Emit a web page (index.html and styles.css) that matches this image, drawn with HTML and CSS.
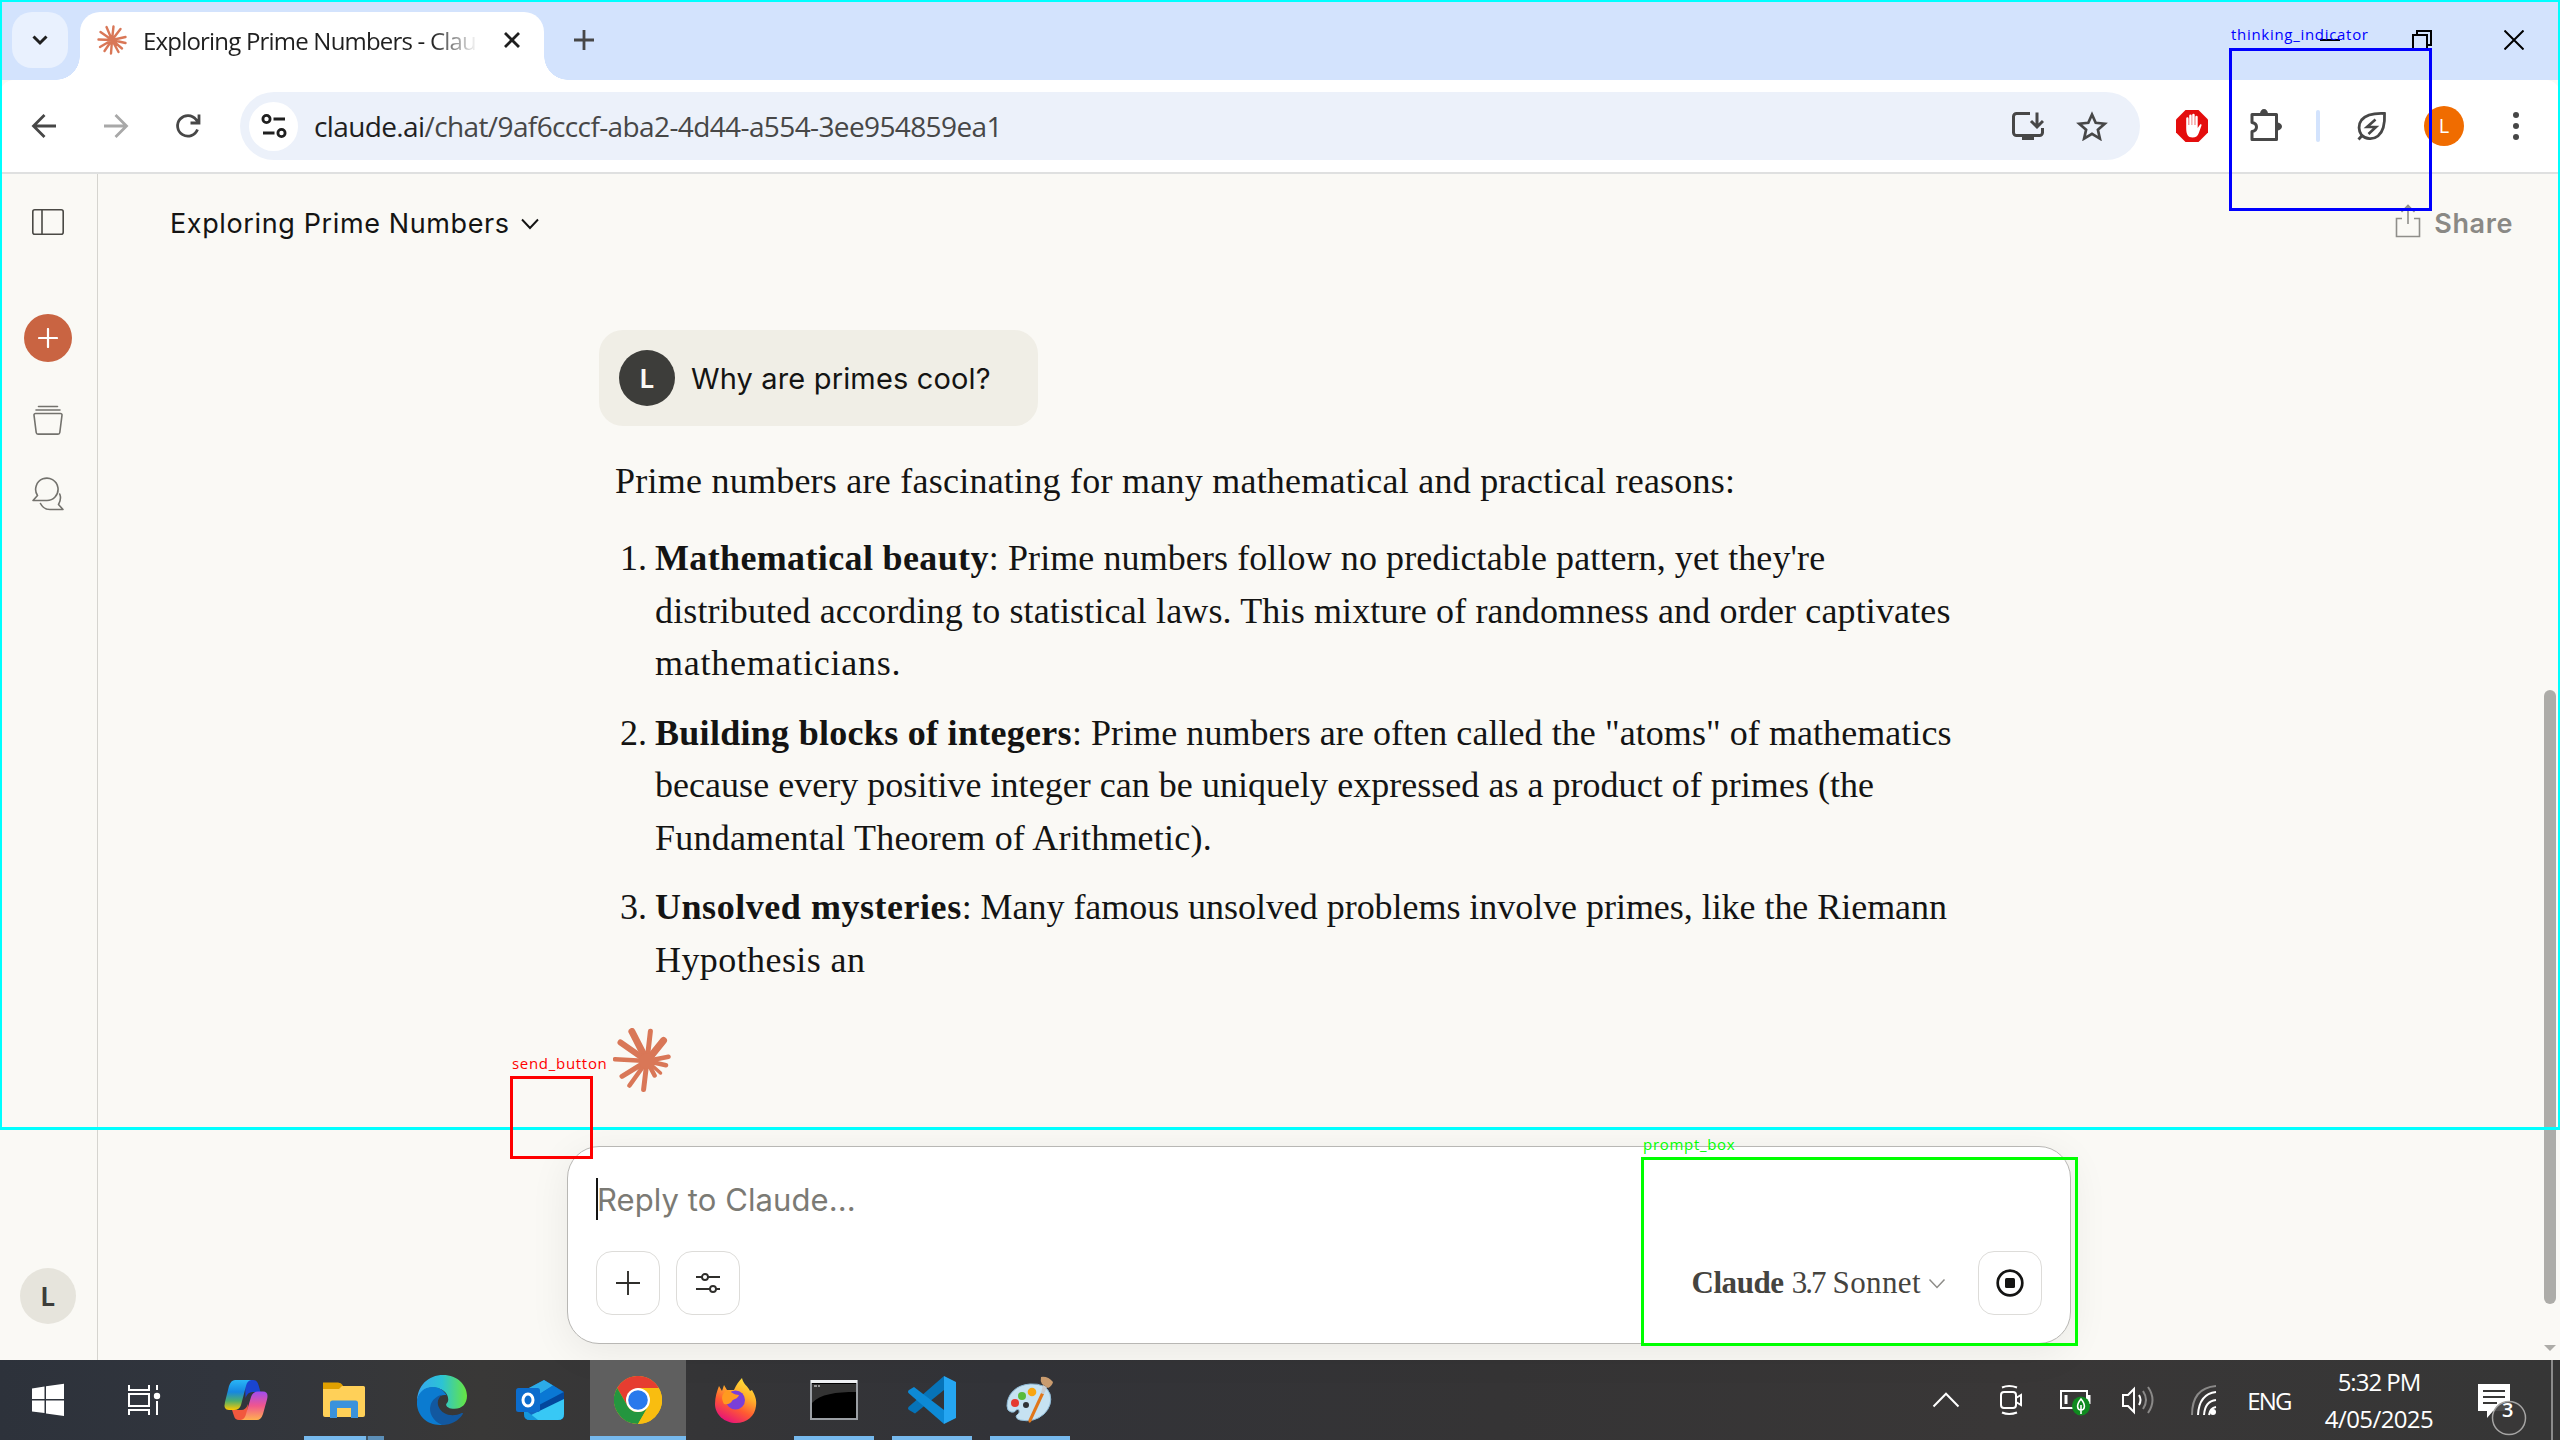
FILE: index.html
```
<!DOCTYPE html>
<html lang="en">
<head>
<meta charset="utf-8">
<title>Exploring Prime Numbers - Claude</title>
<link rel="stylesheet" href="styles.css">
</head>
<body>
<div class="screen">

  <div class="tabstrip">
    <div class="tab-search"><svg width="18" height="16" viewBox="0 0 18 16"><path d="M2.500 4.500l6.500 6.500 6.500-6.500" fill="none" stroke="#1f1f1f" stroke-width="3"/></svg></div>
    <div class="tab">
      <svg class="favicon" width="30" height="30" viewBox="0 0 30 30"><g stroke="#d97757" stroke-width="2.4" stroke-linecap="round"><path d="M15 15L9.5 2M15 15L16.5 1.5M15 15L23.5 4M15 15L28.5 12M15 15L28.5 18M15 15L25 23.5M15 15L21.5 27M15 15L14 28.5M15 15L7.5 26M15 15L3 22M15 15L1.5 14.5M15 15L3.5 7"/></g></svg>
      <span class="tab-title">Exploring Prime Numbers - Clau</span>
      <svg class="tab-close" width="18" height="18" viewBox="0 0 18 18"><path d="M2 2l14 14M16 2L2 16" stroke="#1f1f1f" stroke-width="2.8"/></svg>
    </div>
    <svg class="new-tab" width="22" height="22" viewBox="0 0 22 22"><path d="M11 1v20M1 11h20" stroke="#474747" stroke-width="2.8"/></svg>
    <div class="window-controls">
      <svg width="20" height="20" viewBox="0 0 20 20"><path d="M0 10h20" stroke="#000" stroke-width="2"/></svg>
      <svg width="20" height="20" viewBox="0 0 20 20"><path d="M1 5h14v14H1zM5 5V1h14v14h-4" fill="none" stroke="#000" stroke-width="2"/></svg>
      <svg width="20" height="20" viewBox="0 0 20 20"><path d="M.5.5l19 19M19.5.5l-19 19" stroke="#000" stroke-width="2"/></svg>
    </div>
  </div>

  <div class="toolbar">
    <svg class="nav-back" width="26" height="26" viewBox="0 0 26 26"><path d="M25 13H3M13.5 2L2.500 13l11 11" fill="none" stroke="#474747" stroke-width="2.8"/></svg>
    <svg class="nav-fwd" width="26" height="26" viewBox="0 0 26 26"><path d="M1 13h22M12.500 2l11 11-11 11" fill="none" stroke="#a8a8a8" stroke-width="2.800"/></svg>
    <svg class="nav-reload" width="26" height="26" viewBox="0 0 26 26"><path d="M22.500 16.500A10.300 10.300 0 1 1 21 6.500L23.500 9M24 1.500V10h-8.500" fill="none" stroke="#474747" stroke-width="2.800"/></svg>
    <div class="omnibox">
      <div class="site-info"><svg width="26" height="26" viewBox="0 0 26 26"><g fill="none" stroke="#1f1f1f" stroke-width="2.800"><circle cx="5.500" cy="6" r="3.600"/><path d="M12.500 6H24M2 20h11.500"/><circle cx="20.500" cy="20" r="3.600"/></g></svg></div>
      <span class="url"><b>claude.ai</b>/chat/9af6cccf-aba2-4d44-a554-3ee954859ea1</span>
      <svg class="install" width="32" height="30" viewBox="0 0 32 30"><g fill="none" stroke="#474747" stroke-width="3"><path d="M18 2.500H4.500a3 3 0 0 0-3 3v16a3 3 0 0 0 3 3h23a3 3 0 0 0 3-3V17M25 1.500v14M19 10l6 6 6-6"/></g><path d="M10 25h12v4H10z" fill="#474747"/></svg>
      <svg class="star" width="32" height="30" viewBox="0 0 32 30"><path d="M16 3.500l3.700 8.300 9 .900-6.800 6 2 8.900-7.900-4.700-7.900 4.700 2-8.900-6.800-6 9-.900z" fill="none" stroke="#474747" stroke-width="2.700"/></svg>
    </div>
    <svg class="adblock" width="32" height="32" viewBox="0 0 32 32"><path d="M9.500 0h13L32 9.500v13L22.500 32h-13L0 22.500v-13z" fill="#e40d0d"/><path d="M10.200 18V8.500a1.200 1.200 0 0 1 2.400 0V15h.6V5.800a1.200 1.200 0 0 1 2.500 0V15h.5V5a1.200 1.200 0 0 1 2.500 0v10h.6V7a1.200 1.200 0 0 1 2.400 0v11l2.200-3.200c.6-.9 2-.3 1.600.8L22.800 23c-1 3-3 4.500-6.300 4.500-4.500 0-6.300-3-6.300-9.500z" fill="#fff"/></svg>
    <svg class="puzzle" width="34" height="34" viewBox="0 0 34 34"><path d="M3 5.500h24.500v25H3v-8c6-1 6-8 0-9z" fill="none" stroke="#474747" stroke-width="3" stroke-linejoin="round"/><path d="M11 5a4 5 0 0 1 8 0zM28 13.500a5 4 0 0 1 0 8z" fill="#474747"/></svg>
    <span class="divider"></span>
    <svg class="leaf" width="30" height="30" viewBox="0 0 30 30"><g fill="none" stroke="#474747" stroke-width="2.800"><path d="M27.500 2.500C17 2 9 3.500 4.500 9 1 13.500 1.500 20 4.500 24c4.500 4.500 11.500 5 16.500 1 5.500-4.500 7-13 6.500-22.500zM5.500 24L1.500 28.500"/><path d="M18.500 8.500L10 16h9l-7.500 7" stroke-width="2.600"/></g></svg>
    <span class="profile">L</span>
    <svg class="kebab" width="6" height="30" viewBox="0 0 6 30"><g fill="#474747"><circle cx="3" cy="4" r="3"/><circle cx="3" cy="15" r="3"/><circle cx="3" cy="26" r="3"/></g></svg>
  </div>

  <div class="app">
    <nav class="rail">
      <svg width="32" height="26" viewBox="0 0 32 26"><g fill="none" stroke="#4a4945" stroke-width="1.600"><rect x=".8" y=".8" width="30.400" height="24.400" rx="2"/><path d="M10 1v24"/></g></svg>
      <span class="new-chat"><svg width="20" height="20" viewBox="0 0 20 20"><path d="M10 1v18M1 10h18" stroke="#fff" stroke-width="2.200" stroke-linecap="round"/></svg></span>
      <svg class="rail-projects" width="30" height="30" viewBox="0 0 30 30"><g fill="none" stroke="#73726d" stroke-width="1.600" stroke-linecap="round" stroke-linejoin="round"><path d="M5.500 1.500h19M3 5h24M2.500 8.500h25a1.500 1.500 0 0 1 1.500 1.700L26.800 27.500a1.800 1.800 0 0 1-1.800 1.600H5a1.800 1.800 0 0 1-1.800-1.600L1 10.200a1.500 1.500 0 0 1 1.500-1.700z"/></g></svg>
      <svg class="rail-chats" width="32" height="34" viewBox="0 0 32 34"><g fill="none" stroke="#73726d" stroke-width="1.600" stroke-linecap="round" stroke-linejoin="round"><path d="M14 23.500H1L5.500 18.500A11.200 11.200 0 1 1 14 23.500zM8.500 26.500c2 4 5.500 6 9.500 6h13l-4.500-5c2-3.500 2.700-7 1.200-10.500"/></g></svg>
      <span class="rail-user">L</span>
    </nav>

    <main class="chat">
      <header class="chat-head">
        <span class="chat-name">Exploring Prime Numbers</span>
        <svg width="18" height="12" viewBox="0 0 18 12"><path d="M1 1.500l8 8.500 8-8.500" fill="none" stroke="#141413" stroke-width="1.900"/></svg>
        <span class="share"><svg width="26" height="34" viewBox="0 0 26 34"><path d="M7 14.500H1.500V32.500h23V14.500H19M13 20V2M6.500 8L13 1.500 19.500 8" fill="none" stroke="#8f8e8a" stroke-width="1.600"/></svg>Share</span>
      </header>

      <section class="thread">
        <div class="user-msg"><span class="avatar">L</span><span class="user-text">Why are primes cool?</span></div>
        <div class="reply">
          <p class="ln s23">Prime numbers are fascinating for many mathematical and practical reasons:</p>
          <ol>
            <li><span class="num">1.</span>
              <div class="ln"><b class="s36">Mathematical beauty</b><span class="s9">: Prime numbers follow no predictable pattern, yet they're</span></div>
              <div class="ln s14">distributed according to statistical laws. This mixture of randomness and order captivates</div>
              <div class="ln s75">mathematicians.</div></li>
            <li><span class="num">2.</span>
              <div class="ln"><b class="s27">Building blocks of integers</b><span class="s7">: Prime numbers are often called the "atoms" of mathematics</span></div>
              <div class="ln s3">because every positive integer can be uniquely expressed as a product of primes (the</div>
              <div class="ln s18">Fundamental Theorem of Arithmetic).</div></li>
            <li><span class="num">3.</span>
              <div class="ln"><b class="s56">Unsolved mysteries</b><span class="tight">: Many famous unsolved problems involve primes, like the Riemann</span></div>
              <div class="ln s42">Hypothesis an</div></li>
          </ol>
          <svg class="spark" width="60" height="66" viewBox="0 0 60 66"><g stroke="#d97757" stroke-linecap="round"><path d="M34 33L18.900 3.500M34 33L50.500 12.500" stroke-width="7"/><path d="M34 33L7.500 14.500" stroke-width="6"/><path d="M34 33L37.400 3.300M34 33L30.600 61.500M34 33L9 48.300" stroke-width="5"/><path d="M34 33L55.500 28.700M34 33L53 37.300M34 33L41.600 47.500M34 33L16.500 57.500M34 33L2 31.300" stroke-width="4.500"/><path d="M34 33L47.500 45" stroke-width="3.500"/></g><circle cx="34" cy="33" r="8" fill="#d97757"/></svg>
        </div>

        <div class="composer">
          <div class="placeholder"><i class="caret"></i><span>Reply to Claude...</span></div>
          <div class="tools">
            <span class="btn"><svg width="24" height="24" viewBox="0 0 24 24"><path d="M12 0v24M0 12h24" stroke="#2f2e2b" stroke-width="1.900"/></svg></span>
            <span class="btn"><svg width="24" height="22" viewBox="0 0 24 22"><g fill="none" stroke="#2f2e2b" stroke-width="1.900"><path d="M0 5h6M12 5h12M0 17h14M20 17h4"/><circle cx="9" cy="5" r="3"/><circle cx="17" cy="17" r="3"/></g></svg></span>
            <span class="model"><b>Claude</b><span class="ver">3.7</span><span class="name">Sonnet</span></span>
            <svg class="model-chev" width="18" height="12" viewBox="0 0 18 12"><path d="M1.500 1.500L9 9.500l7.500-8" fill="none" stroke="#8d8c88" stroke-width="1.500"/></svg>
            <span class="btn"><svg width="28" height="28" viewBox="0 0 28 28"><circle cx="14" cy="14" r="12.300" fill="none" stroke="#141413" stroke-width="2.700"/><rect x="9" y="9" width="10" height="10" rx="1.500" fill="#141413"/></svg></span>
          </div>
        </div>
      </section>
      <div class="scroll-thumb"></div>
      <div class="scroll-arrow"></div>
    </main>
  </div>

  <div class="taskbar">
    <span class="cell"><svg width="34" height="34" viewBox="0 0 34 34"><path d="M1 5.500L13.500 3.500V16H1zM15 3.300L33 .8V16H15zM1 17.500h12.500V30L1 28.500zM15 17.500h18V33L15 30.500z" fill="#fff"/></svg></span>
    <span class="cell"><svg width="34" height="32" viewBox="0 0 34 32"><g fill="none" stroke="#fff" stroke-width="2"><path d="M2 1v5h20V1M2 10h20v12H2zM2 31v-5h20v5M30 1v5M30 17v14"/></g><circle cx="30" cy="12" r="3.200" fill="#fff"/></svg></span>
    <span class="cell first-app"><svg width="46" height="42" viewBox="0 0 46 42">
      <defs><linearGradient id="cpA" x2="0" y2="1"><stop stop-color="#29b6f6"/><stop offset=".4" stop-color="#1687e0"/><stop offset=".7" stop-color="#4fae6b"/><stop offset="1" stop-color="#ffc800"/></linearGradient><linearGradient id="cpB" x2="0" y2="1"><stop stop-color="#a04cf0"/><stop offset=".5" stop-color="#f0568e"/><stop offset="1" stop-color="#ffb050"/></linearGradient></defs>
      <path d="M22 1h8q4 0 5.500 5l2 7h-8q-5 0-7 6z" fill="#1a45d0"/><path d="M24 41h-8q-4 0-5-4l-2-6h9q5 0 7-6z" fill="#f2583e"/><path d="M12 1h16q-4 1-5 6l-5 19q-1.500 5-7 5H6q-6 0-4-8L6 7q2-6 6-6z" fill="url(#cpA)"/><path d="M34 41H18q4-1 5-6l5-17q2-5.500 7-5.500h5q6 0 4 8L40 35q-2 6-6 6z" fill="url(#cpB)"/></svg></span>
    <span class="cell run split"><svg width="44" height="38" viewBox="0 0 44 38"><path d="M1 1.500h15q3 0 5 3V10H1z" fill="#e0a000"/><path d="M1 8h16l3-3h21.500q1.500 0 1.500 1.500V34q0 2-2 2H3q-2 0-2-2z" fill="#ffd058"/><path d="M8 37V22q0-2.500 2.500-2.500h23Q36 19.500 36 22v15h-7V27H15v10z" fill="#3a92dc"/></svg></span>
    <span class="cell"><svg width="50" height="50" viewBox="0 0 48 48">
      <defs><linearGradient id="edA"><stop stop-color="#35a6f0"/><stop offset=".5" stop-color="#2cc3d5"/><stop offset="1" stop-color="#67e63f"/></linearGradient></defs>
      <path d="M0 26C0 10 11 0 25 0c14 0 23 10 23 20 0 8-5 12.500-12 12.500-5 0-8-2-8-4 0-1.300 2-2 2-5C30 17 24 12 15 12 7 12 1 18 0 26z" fill="url(#edA)"/><path d="M0 25c1-9 8-14 16-13.500 6 .5 10 3.500 12.500 8C22 18 17 23 18 30c1 8 8 14 17 12-3 3.500-8 6-13 6C8 48-1 37 0 25z" fill="#0b7bd0"/><path d="M24 19c-4 3-5 8-3 12 3 7 13 10 22 5.500.800-.4 1.500.3 1 1C40 44 33 48 24 48c-9-4-13-12-11-19 1.500-5 6-9 11-10z" fill="#1258a0"/></svg></span>
    <span class="cell"><svg width="50" height="42" viewBox="0 0 50 42"><path d="M9 12L29 1l20 12v22q0 6-6 6H15q-6 0-6-6z" fill="#1267c0"/><path d="M10 11L29 1l9 5.500L15 21z" fill="#2cabe8"/><path d="M38 6.500L48 13 20 30V18z" fill="#0a78d4"/><path d="M49 13v9L22 38V27z" fill="#03479c"/><path d="M49 20v15q0 6-6 6H15l-3-3z" fill="#38c8f5"/><path d="M9 30l14 11h-8q-6 0-6-6z" fill="#1597dc"/><rect x="1" y="9" width="24" height="24" rx="2.500" fill="#0c6ccc"/><ellipse cx="13" cy="21" rx="5" ry="6" fill="none" stroke="#fff" stroke-width="3"/></svg></span>
    <span class="cell run active"><svg width="48" height="48" viewBox="0 0 48 48"><circle cx="24" cy="24" r="24" fill="#f9bd10"/><path d="M3.200 12A24 24 0 0 1 44.800 12H24L13.600 30z" fill="#e63d30"/><path d="M3.200 12A24 24 0 0 0 24 48L34.400 30A12 12 0 0 1 13.600 30z" fill="#24963f"/><path d="M24 12h20.800A24 24 0 0 1 24 48l10.400-18z" fill="#f9bd10"/><circle cx="24" cy="24" r="12" fill="#fff"/><circle cx="24" cy="24" r="9.800" fill="#2879ec"/></svg></span>
    <span class="cell"><svg width="44" height="46" viewBox="0 0 44 46">
      <defs><linearGradient id="ffA" x1=".8" y1="0" x2=".3" y2="1"><stop stop-color="#ffe83c"/><stop offset=".35" stop-color="#ffb02a"/><stop offset=".65" stop-color="#ff5a32"/><stop offset="1" stop-color="#e6107c"/></linearGradient></defs>
      <path d="M5 9l3 5 2-6 3 5h7c2-5 5-9 8-12 1 6 6 8 8 13l2-1c3 5 5 10 4 16-1 10-9 17-20 17S1 38 1 27C1 20 3 14 5 9z" fill="url(#ffA)"/><circle cx="21.500" cy="23" r="9.500" fill="#7a3fd8"/><path d="M13 13c5 2 7 5 12 5-1 4-6 4-7 6-1 2-4 4-8 3-2-4-4-9 3-14z" fill="#ff9a20"/></svg></span>
    <span class="cell run"><svg width="48" height="40" viewBox="0 0 48 40"><rect x="1" y="1" width="46" height="38" fill="#000" stroke="#9b9fa4" stroke-width="2"/><path d="M1 1.500h46" stroke="#eef0f2" stroke-width="3"/><path d="M2 4h44v8C26 12 10 14 2 23z" fill="#333"/><path d="M4 6h3M8 6h2" stroke="#bbb" stroke-width="1.500"/></svg></span>
    <span class="cell run"><svg width="48" height="48" viewBox="0 0 48 48"><path d="M36 0v14L7 37.500 1 34q-2-1.500 0-3.500z" fill="#0673b8"/><path d="M36 48V34L6 11 1 14q-2 1.500 0 3.500z" fill="#0d8ad6"/><path d="M36 0l12 6v36l-12 6z" fill="#25a6f2"/></svg></span>
    <span class="cell run"><svg width="48" height="48" viewBox="0 0 48 48"><path d="M24 8C10 9 1 18 1 30q0 5 4 6t5-2q4-2 3 3l-3 3q0 3 4 4 14 3 24-6 9-9 6-20Q40 7 24 8z" fill="#c6e2f2" stroke="#8fbad6"/><circle cx="9" cy="27" r="4" fill="#e53a30"/><circle cx="16" cy="20" r="4" fill="#58bb3c"/><circle cx="26" cy="16" r="4.300" fill="#f8a510"/><circle cx="20" cy="29" r="3" fill="#2f3236"/><path d="M35 17l3 1-13 28q-3 2-2.500-2z" fill="#e0761a"/><path d="M37 9l4 2-3 7-3-1z" fill="#c8ccd0"/><path d="M35 1q7-1 12 5-1 4-5 6l-6-4q-2-3-1-7z" fill="#c99b6e"/></svg></span>

    <div class="tray">
      <span class="t64"><svg width="28" height="16" viewBox="0 0 28 16"><path d="M1.500 14.500L14 1.800l12.500 12.700" fill="none" stroke="#fff" stroke-width="2"/></svg></span>
      <span class="t66"><svg width="24" height="32" viewBox="0 0 24 32"><g fill="none" stroke="#fff" stroke-width="2"><rect x="2" y="8" width="15" height="16" rx="3"/><path d="M17 14l5-3v10l-5-3M3 3.500q7-3 15 0M3 28.500q7 3 15 0"/></g></svg></span>
      <span class="t62"><svg width="32" height="34" viewBox="0 0 32 34"><g fill="none" stroke="#fff" stroke-width="2"><path d="M2 8h26v17H2z"/><path d="M30 12v9M7 12v9" stroke-width="3"/></g><ellipse cx="22" cy="23" rx="9" ry="9.500" fill="#0f8a1f"/><path d="M22 16c5 6 4 11 0 11s-5-5 0-11zM22 22v9" fill="none" stroke="#fff" stroke-width="1.600"/></svg></span>
      <span class="t64"><svg width="34" height="36" viewBox="0 0 34 36"><path d="M2 13h5l6-6v23l-6-6H2zM18 13q3 5 0 10" fill="none" stroke="#fff" stroke-width="2"/><path d="M22 9q6 9 0 18M27 5q9 13 0 26" fill="none" stroke="#8a8988" stroke-width="2"/></svg></span>
      <span class="t68"><svg class="wifi" width="26" height="32" viewBox="0 0 26 32"><g fill="none" stroke="#fff" stroke-width="2"><path d="M1 31Q1 4 25 2" stroke="#8a8988"/><path d="M7 31Q8 10 25 8M13 31q1-14 12-15M18 31q1-7 7-8"/></g><circle cx="22" cy="28" r="3" fill="#fff"/></svg></span>
      <span class="t64 lang">ENG</span>
      <span class="clock"><span class="time">5:32 PM</span><span class="date">4/05/2025</span></span>
      <span class="notif"><svg width="52" height="62" viewBox="0 0 52 62"><path d="M2 1h32v27H17l-6 7v-7H2z" fill="#fff"/><path d="M7 8h22M7 14h22M7 20h14" stroke="#383736" stroke-width="2"/><circle cx="33" cy="35" r="16.500" fill="#3a3938" fill-opacity=".9" stroke="#a5a4a3" stroke-width="1.500"/></svg><em>3</em></span>
      <i class="peek"></i>
    </div>
  </div>

  <div class="region region-window"></div>
  <div class="region region-thinking"><span>thinking_indicator</span></div>
  <div class="region region-send"><span>send_button</span></div>
  <div class="region region-prompt"><span>prompt_box</span></div>
</div>
</body>
</html>
```
FILE: styles.css
```
* { box-sizing: border-box; }
body { margin: 0; }
svg { display: block; flex: none; }

.screen {
  position: relative;
  width: 2560px;
  height: 1440px;
  overflow: hidden;
  display: flex;
  flex-direction: column;
  background: #faf9f5;
  font-family: "Open Sans", sans-serif;
  white-space: nowrap;
}

/* Tab strip */
.tabstrip {
  height: 80px;
  flex: none;
  display: flex;
  align-items: flex-start;
  padding: 12px 0 0 12px;
  background: #d3e3fd;
}
.tab-search {
  width: 56px;
  height: 56px;
  border-radius: 20px;
  background: #e9f1fe;
  display: grid;
  place-items: center;
}
.tab {
  position: relative;
  width: 464px;
  height: 68px;
  margin-left: 12px;
  padding: 0 0 12px 17px;
  border-radius: 20px 20px 0 0;
  background: #fff;
  display: flex;
  align-items: center;
}
.tab::before, .tab::after {
  content: "";
  position: absolute;
  bottom: 0;
  width: 24px;
  height: 24px;
}
.tab::before { left: -24px; background: radial-gradient(circle at 0 0, transparent 23.500px, #fff 24px); }
.tab::after { right: -24px; background: radial-gradient(circle at 100% 0, transparent 23.500px, #fff 24px); }
.tab-title {
  width: 335px;
  margin: 2px 0 0 16px;
  font-size: 24px;
  line-height: 34px;
  letter-spacing: -0.800px;
  color: #1f1f1f;
  -webkit-mask-image: linear-gradient(90deg, #000 86%, transparent);
  mask-image: linear-gradient(90deg, #000 86%, transparent);
}
.tab-close { margin-left: 25px; }
.new-tab { margin: 17px 0 0 29px; }
.window-controls { display: flex; gap: 72px; margin: 18px 36px 0 auto; }

/* Toolbar */
.toolbar {
  height: 94px;
  flex: none;
  display: flex;
  align-items: center;
  padding-left: 31px;
  background: #fff;
  border-bottom: 2px solid #dfe0e0;
  border-radius: 14px 14px 0 0;
}
.nav-fwd { margin-left: 46px; }
.nav-reload { margin-left: 46px; }
.omnibox {
  width: 1900px;
  height: 68px;
  margin-left: 39px;
  padding-left: 9px;
  border-radius: 34px;
  background: #ecf1fa;
  display: flex;
  align-items: center;
}
.site-info {
  width: 49px;
  height: 49px;
  border-radius: 50%;
  background: #fff;
  display: grid;
  place-items: center;
}
.url { margin-left: 16px; font-size: 28px; letter-spacing: -0.615px; color: #474747; }
.url b { font-weight: 400; color: #1f1f1f; }
.install { margin-left: auto; }
.star { margin: 0 32px 0 32px; }
.adblock { margin-left: 36px; }
.puzzle { margin-left: 41px; }
.divider { width: 4px; height: 32px; margin-left: 33px; border-radius: 2px; background: #d3e3fd; }
.leaf { margin-left: 37px; }
.profile {
  width: 40px;
  height: 40px;
  margin-left: 37px;
  border-radius: 50%;
  background: #f06c00;
  color: #fff;
  font-size: 20px;
  line-height: 40px;
  text-align: center;
}
.kebab { margin-left: 49px; }

/* Application */
.app { height: 1186px; flex: none; display: flex; background: #faf9f5; }
.rail {
  width: 98px;
  padding: 35px 1px 0 0;
  border-right: 1px solid #d5d4cf;
  display: flex;
  flex-direction: column;
  align-items: center;
}
.new-chat {
  width: 48px;
  height: 48px;
  margin-top: 79px;
  border-radius: 50%;
  background: #c96442;
  display: grid;
  place-items: center;
}
.rail-projects { margin-top: 43px; }
.rail-chats { margin-top: 42px; }
.rail-user, .avatar {
  width: 56px;
  height: 56px;
  border-radius: 50%;
  font: 700 25px/58px Inter, sans-serif;
  text-align: center;
}
.rail-user { margin: auto 0 36px; background: #e6e4dc; color: #3d3d3a; }

.chat { position: relative; flex: 1; display: flex; flex-direction: column; }
.chat-head {
  height: 100px;
  display: flex;
  align-items: center;
  padding: 0 47px 0 72px;
  font: 27px/40px Inter, sans-serif;
  color: #141413;
}
.chat-name { letter-spacing: 0.620px; }
.chat-head > svg { margin-left: 11px; }
.share {
  display: flex;
  align-items: center;
  gap: 13px;
  margin-left: auto;
  font-weight: 600;
  letter-spacing: 0.600px;
  color: #8a8985;
}
.share svg { margin-top: -6px; }

.thread {
  width: 1504px;
  height: 1086px;
  margin-left: 469px;
  padding-top: 56px;
  display: flex;
  flex-direction: column;
}
.user-msg {
  align-self: flex-start;
  width: 439px;
  height: 96px;
  margin-left: 32px;
  padding-left: 20px;
  border-radius: 24px;
  background: #f0eee6;
  display: flex;
  align-items: center;
  gap: 16px;
  font: 29px/40px Inter, sans-serif;
  color: #141413;
}
.user-text { padding-top: 2px; letter-spacing: 0.150px; }
.avatar { background: #3d3d3a; color: #faf9f5; }

.reply {
  padding: 29px 0 0 48px;
  font: 36px/52.500px "Liberation Serif", serif;
  color: #141413;
}
.reply p { margin: 0 0 24.500px; }
.reply ol { margin: 0; padding: 0; list-style: none; }
.reply li { position: relative; padding-left: 40px; margin-bottom: 17px; }
.num { position: absolute; left: 5px; top: 0; }
.ln { height: 52.500px; }

/* Per-line tracking keeps each line's measure */
.tight { letter-spacing: -0.040px; }
.s3 { letter-spacing: 0.030px; }
.s7 { letter-spacing: 0.060px; }
.s9 { letter-spacing: 0.090px; }
.s14 { letter-spacing: 0.140px; }
.s18 { letter-spacing: 0.220px; }
.s23 { letter-spacing: 0.240px; }
.s27 { letter-spacing: 0.290px; }
.s36 { letter-spacing: 0.360px; }
.s42 { letter-spacing: 0.420px; }
.s56 { letter-spacing: 0.540px; }
.s75 { letter-spacing: 0.750px; }
.spark { margin: 42px 0 0 -2px; }

.composer {
  height: 198px;
  margin: auto 0 16px;
  padding: 31px 28px 0;
  border: 1px solid #b8b7b4;
  border-radius: 32px;
  background: #fff;
  box-shadow: 0 8px 40px rgba(0, 0, 0, 0.070);
}
.placeholder {
  display: flex;
  align-items: center;
  height: 42px;
  font: 31px/42px Inter, sans-serif;
  color: #7b7a74;
}
.placeholder span { padding-top: 2px; margin-left: -1px; letter-spacing: 0.080px; }
.caret { width: 2px; height: 42px; background: #141413; }
.tools { display: flex; align-items: center; margin-top: 31px; }
.btn {
  width: 64px;
  height: 64px;
  border: 1px solid #dddcd9;
  border-radius: 16px;
  display: grid;
  place-items: center;
}
.btn + .btn { margin-left: 16px; }
.model {
  display: flex;
  gap: 8px;
  margin-left: auto;
  font: 31px/40px "Liberation Serif", serif;
  color: #45443f;
}
.model b { letter-spacing: -0.400px; }
.ver { letter-spacing: -2.000px; }
.name { letter-spacing: 0.400px; }
.model-chev { margin: 2px 32px 0 7px; }

.scroll-thumb { position: absolute; right: 4px; top: 516px; width: 12px; height: 614px; border-radius: 6px; background: #adaca8; }
.scroll-arrow { position: absolute; right: 4px; top: 1171px; border: 6px solid transparent; border-top-color: #adaca8; border-bottom: 0; }

/* Taskbar */
.taskbar {
  height: 80px;
  flex: none;
  display: flex;
  gap: 2px;
  background: linear-gradient(90deg, #2d323b 0, #31353d 220px, #393837 480px, #353537 700px, #323338 1000px, #353435 1500px, #393737 2000px, #363636 2560px);
}
.cell { position: relative; width: 96px; height: 80px; display: grid; place-items: center; }
.cell:nth-child(2) { margin-left: -2px; }
.first-app { margin-left: 4px; }
.run::after { content: ""; position: absolute; left: 8px; right: 8px; bottom: 0; height: 4px; background: #76b9ed; }
.split::after { background: linear-gradient(90deg, #76b9ed 62px, #3f5566 62px, #3f5566 64px, #5c8fb8 64px); }
.active { background: #5f5f5f; }
.active::after { left: 0; right: 0; }
.tray { display: flex; align-items: center; margin-left: auto; color: #fff; font-size: 24px; }
.tray > span { display: grid; place-items: center; }
.t62 { width: 62px; }
.t64 { width: 64px; }
.t66 { width: 66px; }
.t68 { width: 68px; }
.tray .lang { padding-right: 2px; letter-spacing: -1.800px; }
.tray .clock { width: 155px; padding-right: 1px; line-height: 37px; }
.time { letter-spacing: -1px; }
.date { letter-spacing: -0.600px; }
.tray .notif { position: relative; width: 76px; }
.notif svg { margin: 27px 0 0 14px; }
.notif em { position: absolute; left: 45px; top: 37px; font: 600 20px/34px "Open Sans", sans-serif; }
.peek { width: 2px; height: 80px; margin: 0 7px 0 18px; background: #8c8c8c; }

/* Labelled regions drawn over the desktop */
.region { position: absolute; border: 3px solid; }
.region span { position: absolute; font: 15px/18px "Open Sans", sans-serif; letter-spacing: 0.700px; }
.region-window { left: 0; top: 0; width: 2560px; height: 1130px; color: #0ff; border-width: 2px 2px 3px 2px; }
.region-thinking { left: 2229px; top: 48px; width: 203px; height: 163px; color: #00f; }
.region-thinking span { left: -1px; top: -26px; }
.region-send { left: 510px; top: 1076px; width: 83px; height: 83px; color: #f00; }
.region-send span { left: -1px; top: -25px; }
.region-prompt { left: 1641px; top: 1157px; width: 437px; height: 189px; color: #0f0; }
.region-prompt span { left: -1px; top: -25px; }
```
